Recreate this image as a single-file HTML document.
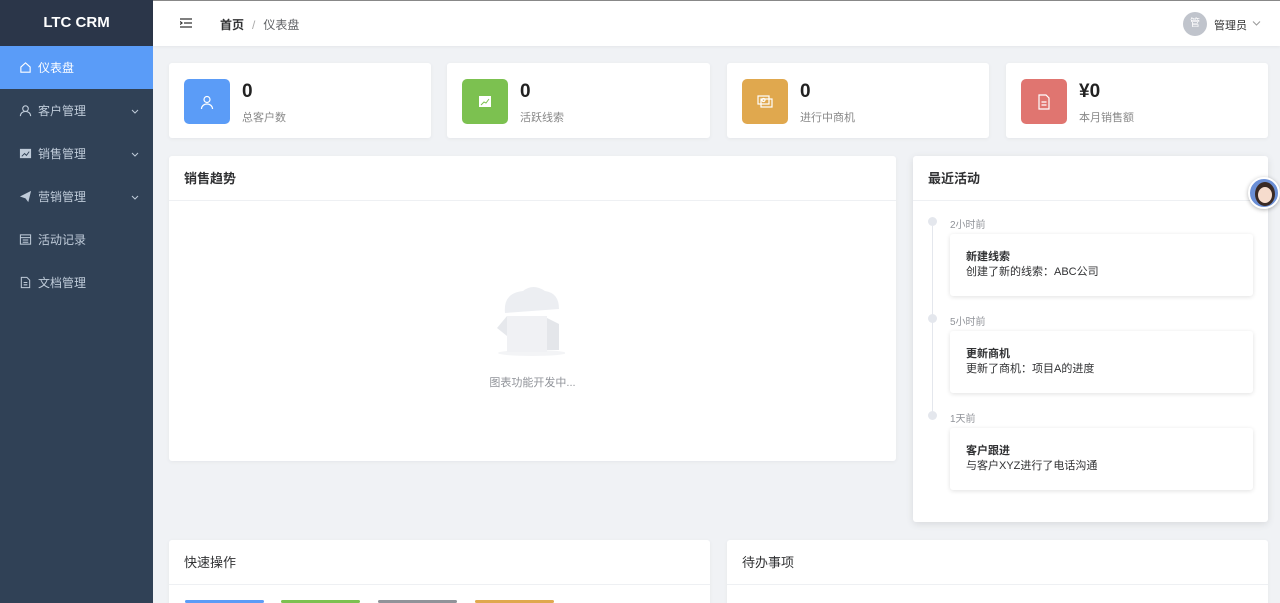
<!DOCTYPE html>
<html><head><meta charset="utf-8"><style>
*{box-sizing:border-box;margin:0;padding:0}
html,body{width:1280px;height:603px;overflow:hidden}
body{background:#f0f2f5;font-family:"Liberation Sans","Noto Sans CJK SC",sans-serif;position:relative;color:#303133}
.side{position:absolute;left:0;top:0;width:153px;height:603px;background:#304156}
.logo{height:46px;background:#2b3649;color:#fff;font-weight:bold;font-size:15px;text-align:center;line-height:46px}
.mi{height:43px;display:flex;align-items:center;padding-left:19px;color:#bfcbd9;font-size:12px;position:relative}
.mi svg{margin-right:6px}
.mi.act{background:#5a9cf8;color:#fff}
.mi .ar{position:absolute;right:14px;top:18px;margin:0}
.hdr{position:absolute;left:153px;top:0;right:0;height:46px;background:#fff;border-top:1px solid #888;box-shadow:0 1px 3px rgba(0,0,0,.05)}
.card{position:absolute;background:#fff;border-radius:3px;box-shadow:0 1px 4px rgba(0,0,0,.05)}
.stat .ic{position:absolute;left:15px;top:16px;width:46px;height:45px;border-radius:5px;display:flex;align-items:center;justify-content:center}
.stat .n{position:absolute;left:73px;top:18px;font-size:19px;font-weight:bold;color:#222}
.stat .l{position:absolute;left:73px;top:46px;font-size:11px;color:#888}
.ch{height:45px;border-bottom:1px solid #eef0f3;padding-left:15px;line-height:45px;font-size:13px;font-weight:bold;color:#303133}
.t{position:absolute;left:950px;font-size:10px;color:#909399}
.dot{position:absolute;left:928px;width:9px;height:9px;border-radius:50%;background:#e4e7ed}
.ac{position:absolute;left:950px;width:303px;height:62px;background:#fff;border-radius:3px;box-shadow:0 1px 5px rgba(0,0,0,.12);padding:16px 0 0 16px;font-size:11px;line-height:15px;color:#303133}
.ac b{display:block}
.btn{position:absolute;top:600px;width:79px;height:10px;border-radius:3px}
</style></head><body>
<div class="side">
<div class="logo">LTC CRM</div>
<div class="mi act"><svg width="13" height="13" viewBox="0 0 14 14" fill="none" stroke="#fff" stroke-width="1.2"><path d="M2 6.5L7 2l5 4.5V12H2z"/></svg>仪表盘</div>
<div class="mi"><svg width="13" height="13" viewBox="0 0 14 14" fill="none" stroke="#bfcbd9" stroke-width="1.2"><circle cx="7" cy="5" r="3"/><path d="M1.5 13c0-3 2.5-5 5.5-5s5.5 2 5.5 5"/></svg>客户管理<svg class="ar" width="8" height="8" viewBox="0 0 8 8" fill="none" stroke="#bfcbd9"><path d="M1 3l3 3 3-3"/></svg></div>
<div class="mi"><svg width="13" height="13" viewBox="0 0 14 14"><rect x="1" y="2" width="12" height="10" fill="#bfcbd9"/><path d="M3 10l3-3 2 2 3-4" stroke="#304156" fill="none"/></svg>销售管理<svg class="ar" width="8" height="8" viewBox="0 0 8 8" fill="none" stroke="#bfcbd9"><path d="M1 3l3 3 3-3"/></svg></div>
<div class="mi"><svg width="13" height="13" viewBox="0 0 14 14"><path d="M1 7L13 1 10 13 7 9z" fill="#bfcbd9"/></svg>营销管理<svg class="ar" width="8" height="8" viewBox="0 0 8 8" fill="none" stroke="#bfcbd9"><path d="M1 3l3 3 3-3"/></svg></div>
<div class="mi"><svg width="13" height="13" viewBox="0 0 14 14" fill="none" stroke="#bfcbd9" stroke-width="1.1"><rect x="1.5" y="2" width="11" height="10"/><path d="M1.5 5h11M4 7.5h6M4 10h6"/></svg>活动记录</div>
<div class="mi"><svg width="13" height="13" viewBox="0 0 14 14" fill="none" stroke="#bfcbd9" stroke-width="1.1"><path d="M2.5 1.5h6l3 3v8h-9z"/><path d="M5 7h4M5 9.5h4"/></svg>文档管理</div>
</div>
<div class="hdr">
<svg style="position:absolute;left:27px;top:17px" width="12" height="10" viewBox="0 0 12 10" stroke="#333" stroke-width="1.2"><path d="M0 1h12M4 5h8M0 9h12M0 3.5l2 1.5-2 1.5" fill="none"/></svg>
<div style="position:absolute;left:67px;top:15px;font-size:12px;color:#303133"><b>首页</b><span style="color:#aaa;margin:0 8px">/</span><span style="color:#606266">仪表盘</span></div>
<div style="position:absolute;left:1030px;top:11px;width:24px;height:24px;border-radius:50%;background:#c0c4cc;color:#fff;font-size:10px;text-align:center;line-height:24px">管</div>
<div style="position:absolute;left:1061px;top:16px;font-size:11px;color:#333">管理员</div>
<svg style="position:absolute;left:1099px;top:19px" width="9" height="7" viewBox="0 0 9 7" fill="none" stroke="#999"><path d="M1 1.5l3.5 3.5 3.5-3.5"/></svg>
</div>

<div class="card stat" style="left:169px;top:63px;width:262px;height:75px"><div class="ic" style="background:#5b9cf7"><svg width="16" height="16" viewBox="0 0 16 16" fill="none" stroke="#fff" stroke-width="1.2"><circle cx="8" cy="5.5" r="3"/><path d="M2.5 15c0-3 2.5-5 5.5-5s5.5 2 5.5 5"/></svg></div><div class="n">0</div><div class="l">总客户数</div></div>
<div class="card stat" style="left:447px;top:63px;width:263px;height:75px"><div class="ic" style="background:#7cc150"><svg width="12" height="12" viewBox="0 0 12 12"><rect width="12" height="11" fill="#fff"/><path d="M2 9l3-3 2 1 3-4" stroke="#7cc150" fill="none"/></svg></div><div class="n">0</div><div class="l">活跃线索</div></div>
<div class="card stat" style="left:727px;top:63px;width:262px;height:75px"><div class="ic" style="background:#e0a84e"><svg width="16" height="14" viewBox="0 0 16 14" fill="none" stroke="#fff" stroke-width="1.2"><rect x="1" y="1" width="11" height="8"/><rect x="4" y="4" width="11" height="8"/><circle cx="6.5" cy="5" r="1.5"/></svg></div><div class="n">0</div><div class="l">进行中商机</div></div>
<div class="card stat" style="left:1006px;top:63px;width:262px;height:75px"><div class="ic" style="background:#e07570"><svg width="14" height="16" viewBox="0 0 14 16" fill="none" stroke="#fff" stroke-width="1.2"><path d="M2 1h7l3 3v11H2z"/><path d="M4.5 8h5M4.5 11h5"/></svg></div><div class="n">¥0</div><div class="l">本月销售额</div></div>

<div class="card" style="left:169px;top:156px;width:727px;height:305px"><div class="ch">销售趋势</div>
<svg style="position:absolute;left:326px;top:122px" width="70" height="80" viewBox="0 0 70 80"><ellipse cx="37" cy="75" rx="34" ry="3" fill="#f3f4f6"/><path d="M10 35q-2-20 18-22 10-8 22 0 14 2 14 18" fill="#eceef2"/><rect x="12" y="38" width="40" height="36" fill="#f0f1f4"/><path d="M2 50l10-12v20z" fill="#e6e8ec"/><path d="M52 40l12 6v26H52z" fill="#e4e6ea"/></svg>
<div style="position:absolute;left:0;right:0;top:218px;text-align:center;font-size:11px;color:#909399">图表功能开发中...</div></div>

<div class="card" style="left:913px;top:156px;width:355px;height:366px;box-shadow:0 2px 8px rgba(0,0,0,.1)"><div class="ch">最近活动</div></div>
<div style="position:absolute;left:932px;top:226px;width:1px;height:190px;background:#e4e7ed"></div>
<div class="dot" style="top:217px"></div><div class="t" style="top:216px">2小时前</div>
<div class="ac" style="top:234px"><b>新建线索</b>创建了新的线索：ABC公司</div>
<div class="dot" style="top:314px"></div><div class="t" style="top:313px">5小时前</div>
<div class="ac" style="top:331px"><b>更新商机</b>更新了商机：项目A的进度</div>
<div class="dot" style="top:411px"></div><div class="t" style="top:410px">1天前</div>
<div class="ac" style="top:428px"><b>客户跟进</b>与客户XYZ进行了电话沟通</div>

<div style="position:absolute;left:1248px;top:177px;width:32px;height:32px;border-radius:50%;background:#6b8fd6;border:2px solid #fff;box-shadow:0 1px 4px rgba(0,0,0,.3);overflow:hidden"><div style="position:absolute;left:5px;top:3px;width:20px;height:24px;border-radius:50%;background:#3a2a25"></div><div style="position:absolute;left:8px;top:8px;width:14px;height:16px;border-radius:50%;background:#f6dccd"></div></div>

<div class="card" style="left:169px;top:540px;width:541px;height:63px;border-radius:3px 3px 0 0"><div class="ch" style="font-weight:normal">快速操作</div></div>
<div class="card" style="left:727px;top:540px;width:541px;height:63px;border-radius:3px 3px 0 0"><div class="ch" style="font-weight:normal">待办事项</div></div>
<div class="btn" style="left:185px;background:#5b9cf7;height:3px"></div>
<div class="btn" style="left:281px;background:#7cc150;height:3px"></div>
<div class="btn" style="left:378px;background:#909399;height:3px"></div>
<div class="btn" style="left:475px;background:#e0a84e;height:3px"></div>
</body></html>
